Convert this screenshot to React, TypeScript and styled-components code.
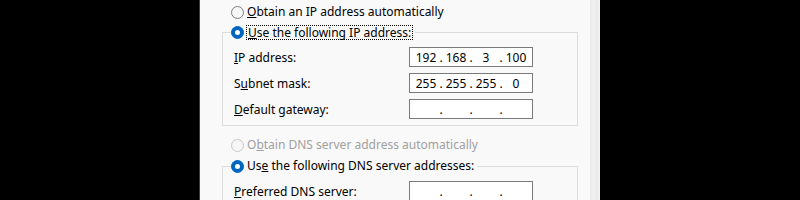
import React from 'react';
import styled, { createGlobalStyle } from 'styled-components';

const GlobalStyle = createGlobalStyle`
  html, body {
    margin: 0;
    padding: 0;
    background: #000;
  }
  body {
    font-family: 'Noto Sans', 'Segoe UI', sans-serif;
    font-size: 12px;
    color: #000;
  }
`;

type RadioProps = { $checked?: boolean; $disabled?: boolean };

const ipRows = [
  { label: 'IP address:', key: 'I', rest: 'P address:', value: ['192', '168', '3', '100'] },
  { label: 'Subnet mask:', pre: 'S', key: 'u', rest: 'bnet mask:', value: ['255', '255', '255', '0'] },
  { label: 'Default gateway:', key: 'D', rest: 'efault gateway:', value: ['', '', '', ''] },
];

const Accel: React.FC<{ pre?: string; k: string; rest: string }> = ({ pre, k, rest }) => (
  <>
    {pre}
    <u>{k}</u>
    {rest}
  </>
);

const IpBox: React.FC<{ value: string[] }> = ({ value }) => (
  <S.IpInput>
    {value.map((part, i) => (
      <React.Fragment key={i}>
        <S.Octet>{part}</S.Octet>
        {i < 3 && <S.Dot>.</S.Dot>}
      </React.Fragment>
    ))}
  </S.IpInput>
);

const App: React.FC = () => {
  return (
    <>
      <GlobalStyle />
      <S.Stage>
        <S.Panel>
          <S.Content>
            <S.OptionRow>
              <S.Radio />
              <S.OptionText>
                <Accel k="O" rest="btain an IP address automatically" />
              </S.OptionText>
            </S.OptionRow>

            <S.Group $gap={3}>
              <S.Legend>
                <S.Radio $checked />
                <S.FocusText>
                  <Accel k="U" rest="se the following IP address:" />
                </S.FocusText>
              </S.Legend>
              <S.FieldGrid>
                {ipRows.map((row) => (
                  <React.Fragment key={row.label}>
                    <S.FieldLabel>
                      <Accel pre={row.pre} k={row.key} rest={row.rest} />
                    </S.FieldLabel>
                    <IpBox value={row.value} />
                  </React.Fragment>
                ))}
              </S.FieldGrid>
            </S.Group>

            <S.OptionRow $gap={12}>
              <S.Radio $disabled />
              <S.OptionText $disabled>
                <Accel pre="O" k="b" rest="tain DNS server address automatically" />
              </S.OptionText>
            </S.OptionRow>

            <S.Group $gap={4}>
              <S.Legend>
                <S.Radio $checked />
                <S.OptionText>
                  <Accel pre="Us" k="e" rest=" the following DNS server addresses:" />
                </S.OptionText>
              </S.Legend>
              <S.FieldGrid>
                <S.FieldLabel>
                  <Accel k="P" rest="referred DNS server:" />
                </S.FieldLabel>
                <IpBox value={['', '', '', '']} />
              </S.FieldGrid>
            </S.Group>
          </S.Content>
          <S.WindowEdge />
        </S.Panel>
      </S.Stage>
    </>
  );
};

const S = {
  Stage: styled.div`
    width: 800px;
    height: 200px;
    overflow: hidden;
    background: #000;
  `,
  Panel: styled.div`
    margin-left: 199px;
    width: 401px;
    height: 200px;
    display: flex;
    background: #f9f9f9;
    border-left: 1px solid #3c3c3c;
    box-sizing: border-box;
  `,
  Content: styled.div`
    flex: 1;
    padding: 5px 11px 0 22px;
    display: flex;
    flex-direction: column;
  `,
  WindowEdge: styled.div`
    width: 10px;
    background: linear-gradient(
      to right,
      #f3f3f3 0px,
      #e6e6e6 1px,
      #f4f4f4 2px,
      #ededed 3px,
      #f0f0f0 5px,
      #e8e8e8 7px,
      #f2f2f2 9px
    );
  `,
  OptionRow: styled.div<{ $gap?: number }>`
    display: flex;
    align-items: center;
    height: 20px;
    padding-left: 9px;
    margin-top: ${(p) => p.$gap ?? 0}px;
  `,
  Radio: styled.span<RadioProps>`
    width: 13px;
    height: 13px;
    border-radius: 50%;
    box-sizing: border-box;
    flex-shrink: 0;
    margin-right: 3px;
    background: ${(p) => (p.$checked ? '#0067c0' : '#f6f6f6')};
    border: 1px solid
      ${(p) => (p.$checked ? '#0067c0' : p.$disabled ? '#c8c8c8' : '#7f7f7f')};
    display: flex;
    align-items: center;
    justify-content: center;

    &::after {
      content: '';
      display: ${(p) => (p.$checked ? 'block' : 'none')};
      width: 5px;
      height: 5px;
      border-radius: 50%;
      background: #fff;
    }
  `,
  OptionText: styled.span<{ $disabled?: boolean }>`
    color: ${(p) => (p.$disabled ? '#a0a0a0' : '#000')};
    line-height: 14px;
    white-space: nowrap;
  `,
  FocusText: styled.span`
    line-height: 13px;
    white-space: nowrap;
    outline: 1px dotted #000;
    outline-offset: 0;
    padding: 0 1px;
  `,
  Group: styled.fieldset<{ $gap: number }>`
    margin: ${(p) => p.$gap}px 0 0 0;
    padding: 5px 44px 6px 11px;
    border: 1px solid #dcdcdc;
    min-width: 0;
    width: 356px;
    box-sizing: border-box;
  `,
  Legend: styled.legend`
    display: flex;
    align-items: center;
    height: 20px;
    padding: 0 3px 0 0;
    margin-left: -3px;
  `,
  FieldGrid: styled.div`
    display: grid;
    grid-template-columns: 175px 124px;
    row-gap: 6px;
    align-items: center;
  `,
  FieldLabel: styled.span`
    white-space: nowrap;
  `,
  IpInput: styled.div`
    height: 20px;
    box-sizing: border-box;
    border: 1px solid #7a7a7a;
    background: #fff;
    display: flex;
    align-items: center;
    padding-left: 3px;
  `,
  Octet: styled.span`
    width: 26px;
    text-align: center;
  `,
  Dot: styled.span`
    width: 4px;
    text-align: center;
  `,
};

export default App;
